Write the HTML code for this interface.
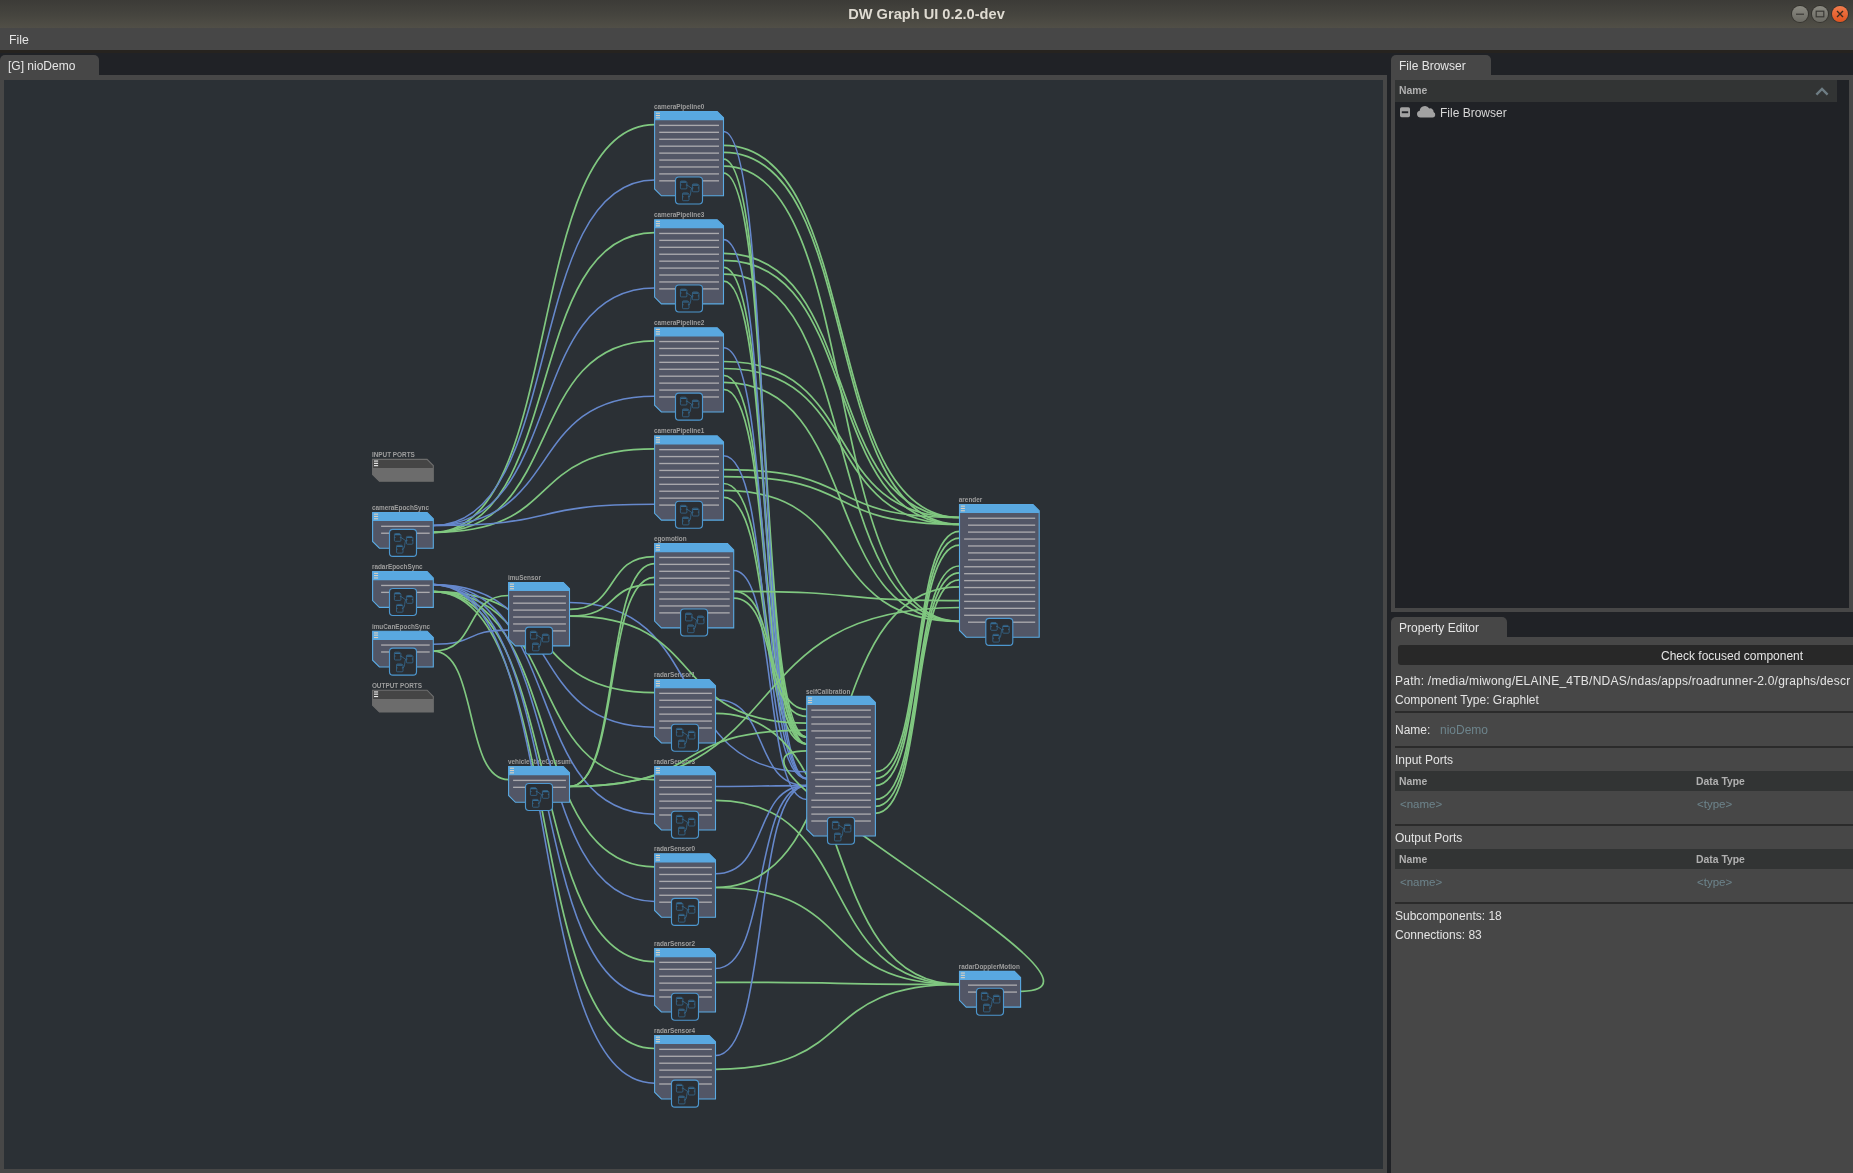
<!DOCTYPE html>
<html><head><meta charset="utf-8"><title>DW Graph UI 0.2.0-dev</title>
<style>
*{box-sizing:border-box}
html,body{margin:0;padding:0}
body{width:1853px;height:1173px;overflow:hidden;background:#474747;position:relative;
 font-family:"Liberation Sans",Arial,sans-serif;font-size:12px;color:#e4e4e4}
.abs{position:absolute}
#titlebar{left:0;top:0;width:1853px;height:28px;background:linear-gradient(#3c3b37,#45443e 50%,#514f47)}
#title{will-change:transform;left:0;top:0;width:1853px;height:28px;line-height:28.6px;text-align:center;font-weight:bold;font-size:14.6px;color:#dfdbd2}
.wb{width:16px;height:16px;border-radius:50%;top:6.2px;background:linear-gradient(#8b8a82,#6b6a63);box-shadow:0 0 0 1px rgba(40,38,34,.55)}
#menubar{left:0;top:28px;width:1853px;height:22px;background:#474747}
#tabbg{left:0;top:50px;width:1853px;height:25px;background:#202226;border-top:3px solid #26231f}
.tab{will-change:transform;background:#474747;border-radius:5px 5px 0 0;height:20px;line-height:22.6px;padding-left:8px;font-size:12px;color:#e6e6e6;white-space:nowrap}
#canvas{left:4px;top:80px;width:1379px;height:1089px;background:#2b3035}
#split{left:1387px;top:53px;width:4px;height:1120px;background:#202226}
#fb{left:1395px;top:80px;width:454px;height:528px;background:#202226}
#fbhead{left:1395px;top:80px;width:442px;height:22px;background:#323434}
.hd{font-weight:bold;font-size:10.4px;color:#b0b0b0}
#gap2{left:1391px;top:612px;width:462px;height:25px;background:#202226}
.t{white-space:nowrap;line-height:14px;height:14px;will-change:transform}
.dim{color:#6d848c}
.sep{left:1395px;width:458px;height:2px;background:#2b2b2b}
.th{left:1395px;width:458px;height:20px;background:#323434}
</style></head>
<body>
<div id="titlebar" class="abs"></div>
<div id="title" class="abs">DW Graph UI 0.2.0-dev</div>
<div class="abs wb" style="left:1792px"><svg width="16" height="16"><path d="M4 8.2h8" stroke="#3a3935" stroke-width="1.2"/></svg></div>
<div class="abs wb" style="left:1812px"><svg width="16" height="16"><rect x="4.2" y="5.2" width="7.6" height="5.6" fill="none" stroke="#3a3935" stroke-width="1.2"/></svg></div>
<div class="abs wb" style="left:1832px;background:linear-gradient(#f17c4d,#df531f)"><svg width="16" height="16"><path d="M5 5l6 6M11 5l-6 6" stroke="#3a2a1f" stroke-width="1.4"/></svg></div>
<div id="menubar" class="abs"></div>
<div class="abs t " style="left:9.3px;top:33.2px;font-size:12.3px">File</div>
<div id="tabbg" class="abs"></div>
<div class="abs tab" style="left:0;top:55px;width:99px">[G] nioDemo</div>
<div id="canvas" class="abs"></div>
<svg width="1379" height="1089" viewBox="4 80 1379 1089" style="position:absolute;left:4px;top:80px;will-change:transform">
<g font-family="Liberation Sans, Arial, sans-serif" font-size="6.4" font-weight="bold" fill="#9e9e9e">
<clipPath id="c_inp"><rect x="371.6" y="449.4" width="63.7" height="10"/></clipPath><text clip-path="url(#c_inp)" x="371.9" y="456.7">INPUT PORTS</text>
<clipPath id="c_ces"><rect x="371.6" y="502.5" width="63.7" height="10"/></clipPath><text clip-path="url(#c_ces)" x="371.9" y="509.8">cameraEpochSync</text>
<clipPath id="c_res"><rect x="371.6" y="561.6" width="63.7" height="10"/></clipPath><text clip-path="url(#c_res)" x="371.9" y="568.9">radarEpochSync</text>
<clipPath id="c_ices"><rect x="371.6" y="621.2" width="63.7" height="10"/></clipPath><text clip-path="url(#c_ices)" x="371.9" y="628.5">imuCanEpochSync</text>
<clipPath id="c_outp"><rect x="371.6" y="680.2" width="63.7" height="10"/></clipPath><text clip-path="url(#c_outp)" x="371.9" y="687.5">OUTPUT PORTS</text>
<clipPath id="c_imu"><rect x="507.6" y="572.5" width="64.0" height="10"/></clipPath><text clip-path="url(#c_imu)" x="507.9" y="579.8">imuSensor</text>
<clipPath id="c_vsc"><rect x="507.6" y="756.6" width="64.0" height="10"/></clipPath><text clip-path="url(#c_vsc)" x="507.9" y="763.9">vehicleStateConsumer</text>
<clipPath id="c_cp0"><rect x="653.6" y="101.6" width="71.9" height="10"/></clipPath><text clip-path="url(#c_cp0)" x="653.9" y="108.9">cameraPipeline0</text>
<clipPath id="c_cp3"><rect x="653.6" y="209.7" width="71.9" height="10"/></clipPath><text clip-path="url(#c_cp3)" x="653.9" y="217.0">cameraPipeline3</text>
<clipPath id="c_cp2"><rect x="653.6" y="317.8" width="71.9" height="10"/></clipPath><text clip-path="url(#c_cp2)" x="653.9" y="325.1">cameraPipeline2</text>
<clipPath id="c_cp1"><rect x="653.6" y="425.9" width="71.9" height="10"/></clipPath><text clip-path="url(#c_cp1)" x="653.9" y="433.2">cameraPipeline1</text>
<clipPath id="c_ego"><rect x="653.6" y="533.6" width="82.1" height="10"/></clipPath><text clip-path="url(#c_ego)" x="653.9" y="540.9">egomotion</text>
<clipPath id="c_rs1"><rect x="653.6" y="669.6" width="63.9" height="10"/></clipPath><text clip-path="url(#c_rs1)" x="653.9" y="676.9">radarSensor1</text>
<clipPath id="c_rs3"><rect x="653.6" y="756.6" width="63.9" height="10"/></clipPath><text clip-path="url(#c_rs3)" x="653.9" y="763.9">radarSensor3</text>
<clipPath id="c_rs0"><rect x="653.6" y="843.8" width="63.9" height="10"/></clipPath><text clip-path="url(#c_rs0)" x="653.9" y="851.0">radarSensor0</text>
<clipPath id="c_rs2"><rect x="653.6" y="938.6" width="63.9" height="10"/></clipPath><text clip-path="url(#c_rs2)" x="653.9" y="945.9">radarSensor2</text>
<clipPath id="c_rs4"><rect x="653.6" y="1025.5" width="63.9" height="10"/></clipPath><text clip-path="url(#c_rs4)" x="653.9" y="1032.8">radarSensor4</text>
<clipPath id="c_sc"><rect x="805.7" y="686.4" width="71.7" height="10"/></clipPath><text clip-path="url(#c_sc)" x="806.0" y="693.6">selfCalibration</text>
<clipPath id="c_ar"><rect x="958.5" y="494.5" width="82.7" height="10"/></clipPath><text clip-path="url(#c_ar)" x="958.8" y="501.8">arender</text>
<clipPath id="c_rdm"><rect x="958.5" y="961.4" width="64.1" height="10"/></clipPath><text clip-path="url(#c_rdm)" x="958.8" y="968.6">radarDopplerMotion</text>
</g>
<g fill="none" stroke-linecap="round">
<path d="M433.3 532.4C566.1 532.4 521.8 124.6 654.6 124.6" stroke="#80c880" stroke-width="1.7"/>
<path d="M723.5 145.4C865.1 145.4 817.9 517.5 959.5 517.5" stroke="#80c880" stroke-width="1.7"/>
<path d="M723.5 152.3C865.1 152.3 817.9 524.4 959.5 524.4" stroke="#80c880" stroke-width="1.7"/>
<path d="M723.5 159.2C773.4 159.2 756.7 737.1 806.7 737.1" stroke="#80c880" stroke-width="1.7"/>
<path d="M723.5 166.2C865.1 166.2 817.9 621.4 959.5 621.4" stroke="#80c880" stroke-width="1.7"/>
<path d="M723.5 173.1C773.4 173.1 756.7 744.0 806.7 744.0" stroke="#80c880" stroke-width="1.7"/>
<path d="M433.3 532.4C566.1 532.4 521.8 232.7 654.6 232.7" stroke="#80c880" stroke-width="1.7"/>
<path d="M723.5 253.4C865.1 253.4 817.9 517.5 959.5 517.5" stroke="#80c880" stroke-width="1.7"/>
<path d="M723.5 260.4C865.1 260.4 817.9 524.4 959.5 524.4" stroke="#80c880" stroke-width="1.7"/>
<path d="M723.5 267.3C773.4 267.3 756.7 737.1 806.7 737.1" stroke="#80c880" stroke-width="1.7"/>
<path d="M723.5 274.2C865.1 274.2 817.9 621.4 959.5 621.4" stroke="#80c880" stroke-width="1.7"/>
<path d="M723.5 281.2C773.4 281.2 756.7 744.0 806.7 744.0" stroke="#80c880" stroke-width="1.7"/>
<path d="M433.3 532.4C566.1 532.4 521.8 340.8 654.6 340.8" stroke="#80c880" stroke-width="1.7"/>
<path d="M723.5 361.5C865.1 361.5 817.9 517.5 959.5 517.5" stroke="#80c880" stroke-width="1.7"/>
<path d="M723.5 368.5C865.1 368.5 817.9 524.4 959.5 524.4" stroke="#80c880" stroke-width="1.7"/>
<path d="M723.5 375.4C773.4 375.4 756.7 737.1 806.7 737.1" stroke="#80c880" stroke-width="1.7"/>
<path d="M723.5 382.3C865.1 382.3 817.9 621.4 959.5 621.4" stroke="#80c880" stroke-width="1.7"/>
<path d="M723.5 389.3C773.4 389.3 756.7 744.0 806.7 744.0" stroke="#80c880" stroke-width="1.7"/>
<path d="M433.3 532.4C566.1 532.4 521.8 448.9 654.6 448.9" stroke="#80c880" stroke-width="1.7"/>
<path d="M723.5 469.6C865.1 469.6 817.9 517.5 959.5 517.5" stroke="#80c880" stroke-width="1.7"/>
<path d="M723.5 476.6C865.1 476.6 817.9 524.4 959.5 524.4" stroke="#80c880" stroke-width="1.7"/>
<path d="M723.5 483.5C773.4 483.5 756.7 737.1 806.7 737.1" stroke="#80c880" stroke-width="1.7"/>
<path d="M723.5 490.4C865.1 490.4 817.9 621.4 959.5 621.4" stroke="#80c880" stroke-width="1.7"/>
<path d="M723.5 497.4C773.4 497.4 756.7 744.0 806.7 744.0" stroke="#80c880" stroke-width="1.7"/>
<path d="M433.3 525.5C566.1 525.5 521.8 180.0 654.6 180.0" stroke="#6688cc" stroke-width="1.55"/>
<path d="M723.5 131.5C773.4 131.5 756.7 778.6 806.7 778.6" stroke="#6688cc" stroke-width="1.55"/>
<path d="M433.3 525.5C566.1 525.5 521.8 288.1 654.6 288.1" stroke="#6688cc" stroke-width="1.55"/>
<path d="M723.5 239.6C773.4 239.6 756.7 778.6 806.7 778.6" stroke="#6688cc" stroke-width="1.55"/>
<path d="M433.3 525.5C566.1 525.5 521.8 396.2 654.6 396.2" stroke="#6688cc" stroke-width="1.55"/>
<path d="M723.5 347.7C773.4 347.7 756.7 778.6 806.7 778.6" stroke="#6688cc" stroke-width="1.55"/>
<path d="M433.3 525.5C566.1 525.5 521.8 504.3 654.6 504.3" stroke="#6688cc" stroke-width="1.55"/>
<path d="M723.5 455.8C773.4 455.8 756.7 778.6 806.7 778.6" stroke="#6688cc" stroke-width="1.55"/>
<path d="M433.3 591.6C566.1 591.6 521.8 692.6 654.6 692.6" stroke="#80c880" stroke-width="1.7"/>
<path d="M715.5 713.3C861.9 713.3 813.1 984.4 959.5 984.4" stroke="#80c880" stroke-width="1.7"/>
<path d="M433.3 591.6C566.1 591.6 521.8 779.6 654.6 779.6" stroke="#80c880" stroke-width="1.7"/>
<path d="M715.5 800.3C861.9 800.3 813.1 984.4 959.5 984.4" stroke="#80c880" stroke-width="1.7"/>
<path d="M433.3 591.6C566.1 591.6 521.8 866.8 654.6 866.8" stroke="#80c880" stroke-width="1.7"/>
<path d="M715.5 887.5C861.9 887.5 813.1 984.4 959.5 984.4" stroke="#80c880" stroke-width="1.7"/>
<path d="M433.3 591.6C566.1 591.6 521.8 961.6 654.6 961.6" stroke="#80c880" stroke-width="1.7"/>
<path d="M715.5 982.3C861.9 982.3 813.1 984.4 959.5 984.4" stroke="#80c880" stroke-width="1.7"/>
<path d="M433.3 591.6C566.1 591.6 521.8 1048.5 654.6 1048.5" stroke="#80c880" stroke-width="1.7"/>
<path d="M715.5 1069.3C861.9 1069.3 813.1 984.4 959.5 984.4" stroke="#80c880" stroke-width="1.7"/>
<path d="M433.3 584.6C566.1 584.6 521.8 727.2 654.6 727.2" stroke="#6688cc" stroke-width="1.55"/>
<path d="M715.5 699.5C770.2 699.5 751.9 785.6 806.7 785.6" stroke="#6688cc" stroke-width="1.55"/>
<path d="M433.3 584.6C566.1 584.6 521.8 814.2 654.6 814.2" stroke="#6688cc" stroke-width="1.55"/>
<path d="M715.5 786.5C770.2 786.5 751.9 785.6 806.7 785.6" stroke="#6688cc" stroke-width="1.55"/>
<path d="M433.3 584.6C566.1 584.6 521.8 901.4 654.6 901.4" stroke="#6688cc" stroke-width="1.55"/>
<path d="M715.5 873.7C770.2 873.7 751.9 785.6 806.7 785.6" stroke="#6688cc" stroke-width="1.55"/>
<path d="M433.3 584.6C566.1 584.6 521.8 996.2 654.6 996.2" stroke="#6688cc" stroke-width="1.55"/>
<path d="M715.5 968.5C770.2 968.5 751.9 785.6 806.7 785.6" stroke="#6688cc" stroke-width="1.55"/>
<path d="M433.3 584.6C566.1 584.6 521.8 1083.2 654.6 1083.2" stroke="#6688cc" stroke-width="1.55"/>
<path d="M715.5 1055.5C770.2 1055.5 751.9 785.6 806.7 785.6" stroke="#6688cc" stroke-width="1.55"/>
<path d="M715.5 887.5C861.9 887.5 813.1 586.8 959.5 586.8" stroke="#80c880" stroke-width="1.7"/>
<path d="M433.3 644.2C478.5 644.2 463.4 630.1 508.6 630.1" stroke="#6688cc" stroke-width="1.55"/>
<path d="M433.3 651.2C478.5 651.2 463.4 595.5 508.6 595.5" stroke="#80c880" stroke-width="1.7"/>
<path d="M433.3 651.2C478.5 651.2 463.4 779.6 508.6 779.6" stroke="#80c880" stroke-width="1.7"/>
<path d="M569.5 602.4C711.8 602.4 664.4 771.7 806.7 771.7" stroke="#6688cc" stroke-width="1.55"/>
<path d="M569.5 609.3C620.6 609.3 603.5 556.6 654.6 556.6" stroke="#80c880" stroke-width="1.7"/>
<path d="M569.5 616.2C620.6 616.2 603.5 584.4 654.6 584.4" stroke="#80c880" stroke-width="1.7"/>
<path d="M569.5 616.2C711.8 616.2 664.4 723.2 806.7 723.2" stroke="#80c880" stroke-width="1.7"/>
<path d="M569.5 786.5C620.6 786.5 603.5 563.6 654.6 563.6" stroke="#80c880" stroke-width="1.7"/>
<path d="M569.5 786.5C620.6 786.5 603.5 577.4 654.6 577.4" stroke="#80c880" stroke-width="1.7"/>
<path d="M569.5 786.5C711.8 786.5 664.4 730.1 806.7 730.1" stroke="#80c880" stroke-width="1.7"/>
<path d="M569.5 786.5C803.5 786.5 725.5 607.5 959.5 607.5" stroke="#80c880" stroke-width="1.7"/>
<path d="M733.7 570.5C777.5 570.5 762.9 799.4 806.7 799.4" stroke="#6688cc" stroke-width="1.55"/>
<path d="M733.7 591.3C869.1 591.3 824.0 600.6 959.5 600.6" stroke="#80c880" stroke-width="1.7"/>
<path d="M733.7 591.3C777.5 591.3 762.9 709.4 806.7 709.4" stroke="#80c880" stroke-width="1.7"/>
<path d="M733.7 598.2C777.5 598.2 762.9 716.3 806.7 716.3" stroke="#80c880" stroke-width="1.7"/>
<path d="M875.4 771.7C925.8 771.7 909.0 531.3 959.5 531.3" stroke="#80c880" stroke-width="1.7"/>
<path d="M875.4 778.6C925.8 778.6 909.0 538.2 959.5 538.2" stroke="#80c880" stroke-width="1.7"/>
<path d="M875.4 785.6C925.8 785.6 909.0 545.2 959.5 545.2" stroke="#80c880" stroke-width="1.7"/>
<path d="M875.4 799.4C925.8 799.4 909.0 566.0 959.5 566.0" stroke="#80c880" stroke-width="1.7"/>
<path d="M875.4 806.4C925.8 806.4 909.0 572.9 959.5 572.9" stroke="#80c880" stroke-width="1.7"/>
<path d="M875.4 813.3C925.8 813.3 909.0 579.8 959.5 579.8" stroke="#80c880" stroke-width="1.7"/>
<path d="M1020.6 991.3C1151.0 991.3 676.2 750.9 806.7 750.9" stroke="#80c880" stroke-width="1.7"/>
</g>
<polygon points="372.6,459.4 427.1,459.4 433.3,465.6 433.3,481.2 379.4,481.2 372.6,474.4" fill="#6c6c6c"/>
<polygon points="372.6,459.4 427.1,459.4 433.3,465.6 433.3,468.0 372.6,468.0" fill="#454545"/>
<polygon points="372.6,459.4 427.1,459.4 433.3,465.6 433.3,481.2 379.4,481.2 372.6,474.4" fill="none" stroke="#6c6c6c" stroke-width="1.1"/>
<rect x="374.0" y="460.5" width="4.1" height="1.1" fill="#f0f0f0"/>
<rect x="374.0" y="462.8" width="4.1" height="1.1" fill="#f0f0f0"/>
<rect x="374.0" y="465.1" width="4.1" height="1.1" fill="#f0f0f0"/>
<polygon points="372.6,512.5 427.1,512.5 433.3,518.7 433.3,548.2 379.4,548.2 372.6,541.4" fill="#525666"/>
<polygon points="372.6,512.5 427.1,512.5 433.3,518.7 433.3,521.1 372.6,521.1" fill="#59a8e0"/>
<polygon points="372.6,512.5 427.1,512.5 433.3,518.7 433.3,548.2 379.4,548.2 372.6,541.4" fill="none" stroke="#5aaae3" stroke-width="1.1"/>
<rect x="374.0" y="513.6" width="4.1" height="1.1" fill="#d9cfc0"/>
<rect x="374.0" y="515.9" width="4.1" height="1.1" fill="#d9cfc0"/>
<rect x="374.0" y="518.2" width="4.1" height="1.1" fill="#d9cfc0"/>
<rect x="381.1" y="525.62" width="48.6" height="1.35" fill="#aaa9ad"/>
<rect x="381.1" y="532.55" width="48.6" height="1.35" fill="#aaa9ad"/>
<g transform="translate(389.5 529.4)">
<rect x="0" y="0" width="27.0" height="27.0" rx="3.4" fill="#2a2e33" stroke="#4d97cf" stroke-width="1.15"/>
<g fill="none" stroke="#366c94" stroke-width="0.75" transform="translate(-0.4 -0.4)"><path d="M5.3 5.4q0-.9.9-.9h4.3l1.3 1.3v5.6q0 .9-.9.9h-4.7q-.9 0-.9-.9z"/><path d="M17.3 8.3q0-.9.9-.9h4.3l1.3 1.3v5.6q0 .9-.9.9h-4.7q-.9 0-.9-.9z"/><path d="M7.4 17.2q0-.9.9-.9h4.3l1.3 1.3v5.6q0 .9-.9.9h-4.7q-.9 0-.9-.9z"/><path d="M11.8 8.3L16.3 11.5h1M13.9 20.4c2.2-1.2 1.4-6.6 2.6-8.8"/><path d="M5.6 5.6h5.6M17.6 8.5h5.6M7.7 17.4h5.6" stroke-width="1.2"/><path d="M5.3 8.4h1.1M11.8 8.4h-1.1M17.3 11.3h1.1M23.8 11.3h-1.1M7.4 20.2h1.1M13.9 20.2h-1.1" stroke-width="0.9"/></g>
</g>
<polygon points="372.6,571.6 427.1,571.6 433.3,577.9 433.3,607.4 379.4,607.4 372.6,600.6" fill="#525666"/>
<polygon points="372.6,571.6 427.1,571.6 433.3,577.9 433.3,580.2 372.6,580.2" fill="#59a8e0"/>
<polygon points="372.6,571.6 427.1,571.6 433.3,577.9 433.3,607.4 379.4,607.4 372.6,600.6" fill="none" stroke="#5aaae3" stroke-width="1.1"/>
<rect x="374.0" y="572.8" width="4.1" height="1.1" fill="#d9cfc0"/>
<rect x="374.0" y="575.0" width="4.1" height="1.1" fill="#d9cfc0"/>
<rect x="374.0" y="577.4" width="4.1" height="1.1" fill="#d9cfc0"/>
<rect x="381.1" y="584.77" width="48.6" height="1.35" fill="#aaa9ad"/>
<rect x="381.1" y="591.70" width="48.6" height="1.35" fill="#aaa9ad"/>
<g transform="translate(389.5 588.5)">
<rect x="0" y="0" width="27.0" height="27.0" rx="3.4" fill="#2a2e33" stroke="#4d97cf" stroke-width="1.15"/>
<g fill="none" stroke="#366c94" stroke-width="0.75" transform="translate(-0.4 -0.4)"><path d="M5.3 5.4q0-.9.9-.9h4.3l1.3 1.3v5.6q0 .9-.9.9h-4.7q-.9 0-.9-.9z"/><path d="M17.3 8.3q0-.9.9-.9h4.3l1.3 1.3v5.6q0 .9-.9.9h-4.7q-.9 0-.9-.9z"/><path d="M7.4 17.2q0-.9.9-.9h4.3l1.3 1.3v5.6q0 .9-.9.9h-4.7q-.9 0-.9-.9z"/><path d="M11.8 8.3L16.3 11.5h1M13.9 20.4c2.2-1.2 1.4-6.6 2.6-8.8"/><path d="M5.6 5.6h5.6M17.6 8.5h5.6M7.7 17.4h5.6" stroke-width="1.2"/><path d="M5.3 8.4h1.1M11.8 8.4h-1.1M17.3 11.3h1.1M23.8 11.3h-1.1M7.4 20.2h1.1M13.9 20.2h-1.1" stroke-width="0.9"/></g>
</g>
<polygon points="372.6,631.2 427.1,631.2 433.3,637.5 433.3,667.0 379.4,667.0 372.6,660.2" fill="#525666"/>
<polygon points="372.6,631.2 427.1,631.2 433.3,637.5 433.3,639.9 372.6,639.9" fill="#59a8e0"/>
<polygon points="372.6,631.2 427.1,631.2 433.3,637.5 433.3,667.0 379.4,667.0 372.6,660.2" fill="none" stroke="#5aaae3" stroke-width="1.1"/>
<rect x="374.0" y="632.4" width="4.1" height="1.1" fill="#d9cfc0"/>
<rect x="374.0" y="634.6" width="4.1" height="1.1" fill="#d9cfc0"/>
<rect x="374.0" y="637.0" width="4.1" height="1.1" fill="#d9cfc0"/>
<rect x="381.1" y="644.37" width="48.6" height="1.35" fill="#aaa9ad"/>
<rect x="381.1" y="651.30" width="48.6" height="1.35" fill="#aaa9ad"/>
<g transform="translate(389.5 648.1)">
<rect x="0" y="0" width="27.0" height="27.0" rx="3.4" fill="#2a2e33" stroke="#4d97cf" stroke-width="1.15"/>
<g fill="none" stroke="#366c94" stroke-width="0.75" transform="translate(-0.4 -0.4)"><path d="M5.3 5.4q0-.9.9-.9h4.3l1.3 1.3v5.6q0 .9-.9.9h-4.7q-.9 0-.9-.9z"/><path d="M17.3 8.3q0-.9.9-.9h4.3l1.3 1.3v5.6q0 .9-.9.9h-4.7q-.9 0-.9-.9z"/><path d="M7.4 17.2q0-.9.9-.9h4.3l1.3 1.3v5.6q0 .9-.9.9h-4.7q-.9 0-.9-.9z"/><path d="M11.8 8.3L16.3 11.5h1M13.9 20.4c2.2-1.2 1.4-6.6 2.6-8.8"/><path d="M5.6 5.6h5.6M17.6 8.5h5.6M7.7 17.4h5.6" stroke-width="1.2"/><path d="M5.3 8.4h1.1M11.8 8.4h-1.1M17.3 11.3h1.1M23.8 11.3h-1.1M7.4 20.2h1.1M13.9 20.2h-1.1" stroke-width="0.9"/></g>
</g>
<polygon points="372.6,690.2 427.1,690.2 433.3,696.5 433.3,712.0 379.4,712.0 372.6,705.2" fill="#6c6c6c"/>
<polygon points="372.6,690.2 427.1,690.2 433.3,696.5 433.3,698.9 372.6,698.9" fill="#454545"/>
<polygon points="372.6,690.2 427.1,690.2 433.3,696.5 433.3,712.0 379.4,712.0 372.6,705.2" fill="none" stroke="#6c6c6c" stroke-width="1.1"/>
<rect x="374.0" y="691.4" width="4.1" height="1.1" fill="#f0f0f0"/>
<rect x="374.0" y="693.6" width="4.1" height="1.1" fill="#f0f0f0"/>
<rect x="374.0" y="696.0" width="4.1" height="1.1" fill="#f0f0f0"/>
<polygon points="508.6,582.5 563.3,582.5 569.5,588.7 569.5,645.9 515.4,645.9 508.6,639.1" fill="#525666"/>
<polygon points="508.6,582.5 563.3,582.5 569.5,588.7 569.5,591.1 508.6,591.1" fill="#59a8e0"/>
<polygon points="508.6,582.5 563.3,582.5 569.5,588.7 569.5,645.9 515.4,645.9 508.6,639.1" fill="none" stroke="#5aaae3" stroke-width="1.1"/>
<rect x="509.9" y="583.6" width="4.1" height="1.1" fill="#d9cfc0"/>
<rect x="509.9" y="585.9" width="4.1" height="1.1" fill="#d9cfc0"/>
<rect x="509.9" y="588.2" width="4.1" height="1.1" fill="#d9cfc0"/>
<rect x="513.1" y="595.57" width="52.8" height="1.35" fill="#aaa9ad"/>
<rect x="513.1" y="602.50" width="52.8" height="1.35" fill="#aaa9ad"/>
<rect x="513.1" y="609.43" width="52.8" height="1.35" fill="#aaa9ad"/>
<rect x="513.1" y="616.36" width="52.8" height="1.35" fill="#aaa9ad"/>
<rect x="513.1" y="623.29" width="52.8" height="1.35" fill="#aaa9ad"/>
<rect x="513.1" y="630.22" width="52.8" height="1.35" fill="#aaa9ad"/>
<g transform="translate(525.5 627.1)">
<rect x="0" y="0" width="27.0" height="27.0" rx="3.4" fill="#2a2e33" stroke="#4d97cf" stroke-width="1.15"/>
<g fill="none" stroke="#366c94" stroke-width="0.75" transform="translate(-0.4 -0.4)"><path d="M5.3 5.4q0-.9.9-.9h4.3l1.3 1.3v5.6q0 .9-.9.9h-4.7q-.9 0-.9-.9z"/><path d="M17.3 8.3q0-.9.9-.9h4.3l1.3 1.3v5.6q0 .9-.9.9h-4.7q-.9 0-.9-.9z"/><path d="M7.4 17.2q0-.9.9-.9h4.3l1.3 1.3v5.6q0 .9-.9.9h-4.7q-.9 0-.9-.9z"/><path d="M11.8 8.3L16.3 11.5h1M13.9 20.4c2.2-1.2 1.4-6.6 2.6-8.8"/><path d="M5.6 5.6h5.6M17.6 8.5h5.6M7.7 17.4h5.6" stroke-width="1.2"/><path d="M5.3 8.4h1.1M11.8 8.4h-1.1M17.3 11.3h1.1M23.8 11.3h-1.1M7.4 20.2h1.1M13.9 20.2h-1.1" stroke-width="0.9"/></g>
</g>
<polygon points="508.6,766.6 563.3,766.6 569.5,772.8 569.5,802.3 515.4,802.3 508.6,795.5" fill="#525666"/>
<polygon points="508.6,766.6 563.3,766.6 569.5,772.8 569.5,775.2 508.6,775.2" fill="#59a8e0"/>
<polygon points="508.6,766.6 563.3,766.6 569.5,772.8 569.5,802.3 515.4,802.3 508.6,795.5" fill="none" stroke="#5aaae3" stroke-width="1.1"/>
<rect x="509.9" y="767.7" width="4.1" height="1.1" fill="#d9cfc0"/>
<rect x="509.9" y="770.0" width="4.1" height="1.1" fill="#d9cfc0"/>
<rect x="509.9" y="772.3" width="4.1" height="1.1" fill="#d9cfc0"/>
<rect x="513.1" y="779.72" width="52.8" height="1.35" fill="#aaa9ad"/>
<rect x="513.1" y="786.65" width="52.8" height="1.35" fill="#aaa9ad"/>
<g transform="translate(525.5 783.5)">
<rect x="0" y="0" width="27.0" height="27.0" rx="3.4" fill="#2a2e33" stroke="#4d97cf" stroke-width="1.15"/>
<g fill="none" stroke="#366c94" stroke-width="0.75" transform="translate(-0.4 -0.4)"><path d="M5.3 5.4q0-.9.9-.9h4.3l1.3 1.3v5.6q0 .9-.9.9h-4.7q-.9 0-.9-.9z"/><path d="M17.3 8.3q0-.9.9-.9h4.3l1.3 1.3v5.6q0 .9-.9.9h-4.7q-.9 0-.9-.9z"/><path d="M7.4 17.2q0-.9.9-.9h4.3l1.3 1.3v5.6q0 .9-.9.9h-4.7q-.9 0-.9-.9z"/><path d="M11.8 8.3L16.3 11.5h1M13.9 20.4c2.2-1.2 1.4-6.6 2.6-8.8"/><path d="M5.6 5.6h5.6M17.6 8.5h5.6M7.7 17.4h5.6" stroke-width="1.2"/><path d="M5.3 8.4h1.1M11.8 8.4h-1.1M17.3 11.3h1.1M23.8 11.3h-1.1M7.4 20.2h1.1M13.9 20.2h-1.1" stroke-width="0.9"/></g>
</g>
<polygon points="654.6,111.6 717.2,111.6 723.5,117.8 723.5,195.8 661.4,195.8 654.6,189.0" fill="#525666"/>
<polygon points="654.6,111.6 717.2,111.6 723.5,117.8 723.5,120.2 654.6,120.2" fill="#59a8e0"/>
<polygon points="654.6,111.6 717.2,111.6 723.5,117.8 723.5,195.8 661.4,195.8 654.6,189.0" fill="none" stroke="#5aaae3" stroke-width="1.1"/>
<rect x="655.9" y="112.7" width="4.1" height="1.1" fill="#d9cfc0"/>
<rect x="655.9" y="115.0" width="4.1" height="1.1" fill="#d9cfc0"/>
<rect x="655.9" y="117.3" width="4.1" height="1.1" fill="#d9cfc0"/>
<rect x="659.2" y="124.72" width="59.8" height="1.35" fill="#aaa9ad"/>
<rect x="659.2" y="131.65" width="59.8" height="1.35" fill="#aaa9ad"/>
<rect x="659.2" y="138.58" width="59.8" height="1.35" fill="#aaa9ad"/>
<rect x="659.2" y="145.51" width="59.8" height="1.35" fill="#aaa9ad"/>
<rect x="659.2" y="152.44" width="59.8" height="1.35" fill="#aaa9ad"/>
<rect x="659.2" y="159.37" width="59.8" height="1.35" fill="#aaa9ad"/>
<rect x="659.2" y="166.30" width="59.8" height="1.35" fill="#aaa9ad"/>
<rect x="659.2" y="173.23" width="59.8" height="1.35" fill="#aaa9ad"/>
<rect x="659.2" y="180.16" width="59.8" height="1.35" fill="#aaa9ad"/>
<g transform="translate(675.5 177.0)">
<rect x="0" y="0" width="27.0" height="27.0" rx="3.4" fill="#2a2e33" stroke="#4d97cf" stroke-width="1.15"/>
<g fill="none" stroke="#366c94" stroke-width="0.75" transform="translate(-0.4 -0.4)"><path d="M5.3 5.4q0-.9.9-.9h4.3l1.3 1.3v5.6q0 .9-.9.9h-4.7q-.9 0-.9-.9z"/><path d="M17.3 8.3q0-.9.9-.9h4.3l1.3 1.3v5.6q0 .9-.9.9h-4.7q-.9 0-.9-.9z"/><path d="M7.4 17.2q0-.9.9-.9h4.3l1.3 1.3v5.6q0 .9-.9.9h-4.7q-.9 0-.9-.9z"/><path d="M11.8 8.3L16.3 11.5h1M13.9 20.4c2.2-1.2 1.4-6.6 2.6-8.8"/><path d="M5.6 5.6h5.6M17.6 8.5h5.6M7.7 17.4h5.6" stroke-width="1.2"/><path d="M5.3 8.4h1.1M11.8 8.4h-1.1M17.3 11.3h1.1M23.8 11.3h-1.1M7.4 20.2h1.1M13.9 20.2h-1.1" stroke-width="0.9"/></g>
</g>
<polygon points="654.6,219.7 717.2,219.7 723.5,225.8 723.5,303.9 661.4,303.9 654.6,297.1" fill="#525666"/>
<polygon points="654.6,219.7 717.2,219.7 723.5,225.8 723.5,228.2 654.6,228.2" fill="#59a8e0"/>
<polygon points="654.6,219.7 717.2,219.7 723.5,225.8 723.5,303.9 661.4,303.9 654.6,297.1" fill="none" stroke="#5aaae3" stroke-width="1.1"/>
<rect x="655.9" y="220.8" width="4.1" height="1.1" fill="#d9cfc0"/>
<rect x="655.9" y="223.1" width="4.1" height="1.1" fill="#d9cfc0"/>
<rect x="655.9" y="225.3" width="4.1" height="1.1" fill="#d9cfc0"/>
<rect x="659.2" y="232.77" width="59.8" height="1.35" fill="#aaa9ad"/>
<rect x="659.2" y="239.70" width="59.8" height="1.35" fill="#aaa9ad"/>
<rect x="659.2" y="246.63" width="59.8" height="1.35" fill="#aaa9ad"/>
<rect x="659.2" y="253.56" width="59.8" height="1.35" fill="#aaa9ad"/>
<rect x="659.2" y="260.49" width="59.8" height="1.35" fill="#aaa9ad"/>
<rect x="659.2" y="267.42" width="59.8" height="1.35" fill="#aaa9ad"/>
<rect x="659.2" y="274.35" width="59.8" height="1.35" fill="#aaa9ad"/>
<rect x="659.2" y="281.28" width="59.8" height="1.35" fill="#aaa9ad"/>
<rect x="659.2" y="288.21" width="59.8" height="1.35" fill="#aaa9ad"/>
<g transform="translate(675.5 285.0)">
<rect x="0" y="0" width="27.0" height="27.0" rx="3.4" fill="#2a2e33" stroke="#4d97cf" stroke-width="1.15"/>
<g fill="none" stroke="#366c94" stroke-width="0.75" transform="translate(-0.4 -0.4)"><path d="M5.3 5.4q0-.9.9-.9h4.3l1.3 1.3v5.6q0 .9-.9.9h-4.7q-.9 0-.9-.9z"/><path d="M17.3 8.3q0-.9.9-.9h4.3l1.3 1.3v5.6q0 .9-.9.9h-4.7q-.9 0-.9-.9z"/><path d="M7.4 17.2q0-.9.9-.9h4.3l1.3 1.3v5.6q0 .9-.9.9h-4.7q-.9 0-.9-.9z"/><path d="M11.8 8.3L16.3 11.5h1M13.9 20.4c2.2-1.2 1.4-6.6 2.6-8.8"/><path d="M5.6 5.6h5.6M17.6 8.5h5.6M7.7 17.4h5.6" stroke-width="1.2"/><path d="M5.3 8.4h1.1M11.8 8.4h-1.1M17.3 11.3h1.1M23.8 11.3h-1.1M7.4 20.2h1.1M13.9 20.2h-1.1" stroke-width="0.9"/></g>
</g>
<polygon points="654.6,327.8 717.2,327.8 723.5,333.9 723.5,412.0 661.4,412.0 654.6,405.2" fill="#525666"/>
<polygon points="654.6,327.8 717.2,327.8 723.5,333.9 723.5,336.4 654.6,336.4" fill="#59a8e0"/>
<polygon points="654.6,327.8 717.2,327.8 723.5,333.9 723.5,412.0 661.4,412.0 654.6,405.2" fill="none" stroke="#5aaae3" stroke-width="1.1"/>
<rect x="655.9" y="328.9" width="4.1" height="1.1" fill="#d9cfc0"/>
<rect x="655.9" y="331.2" width="4.1" height="1.1" fill="#d9cfc0"/>
<rect x="655.9" y="333.5" width="4.1" height="1.1" fill="#d9cfc0"/>
<rect x="659.2" y="340.87" width="59.8" height="1.35" fill="#aaa9ad"/>
<rect x="659.2" y="347.80" width="59.8" height="1.35" fill="#aaa9ad"/>
<rect x="659.2" y="354.73" width="59.8" height="1.35" fill="#aaa9ad"/>
<rect x="659.2" y="361.66" width="59.8" height="1.35" fill="#aaa9ad"/>
<rect x="659.2" y="368.59" width="59.8" height="1.35" fill="#aaa9ad"/>
<rect x="659.2" y="375.52" width="59.8" height="1.35" fill="#aaa9ad"/>
<rect x="659.2" y="382.45" width="59.8" height="1.35" fill="#aaa9ad"/>
<rect x="659.2" y="389.38" width="59.8" height="1.35" fill="#aaa9ad"/>
<rect x="659.2" y="396.31" width="59.8" height="1.35" fill="#aaa9ad"/>
<g transform="translate(675.5 393.1)">
<rect x="0" y="0" width="27.0" height="27.0" rx="3.4" fill="#2a2e33" stroke="#4d97cf" stroke-width="1.15"/>
<g fill="none" stroke="#366c94" stroke-width="0.75" transform="translate(-0.4 -0.4)"><path d="M5.3 5.4q0-.9.9-.9h4.3l1.3 1.3v5.6q0 .9-.9.9h-4.7q-.9 0-.9-.9z"/><path d="M17.3 8.3q0-.9.9-.9h4.3l1.3 1.3v5.6q0 .9-.9.9h-4.7q-.9 0-.9-.9z"/><path d="M7.4 17.2q0-.9.9-.9h4.3l1.3 1.3v5.6q0 .9-.9.9h-4.7q-.9 0-.9-.9z"/><path d="M11.8 8.3L16.3 11.5h1M13.9 20.4c2.2-1.2 1.4-6.6 2.6-8.8"/><path d="M5.6 5.6h5.6M17.6 8.5h5.6M7.7 17.4h5.6" stroke-width="1.2"/><path d="M5.3 8.4h1.1M11.8 8.4h-1.1M17.3 11.3h1.1M23.8 11.3h-1.1M7.4 20.2h1.1M13.9 20.2h-1.1" stroke-width="0.9"/></g>
</g>
<polygon points="654.6,435.9 717.2,435.9 723.5,442.1 723.5,520.1 661.4,520.1 654.6,513.3" fill="#525666"/>
<polygon points="654.6,435.9 717.2,435.9 723.5,442.1 723.5,444.5 654.6,444.5" fill="#59a8e0"/>
<polygon points="654.6,435.9 717.2,435.9 723.5,442.1 723.5,520.1 661.4,520.1 654.6,513.3" fill="none" stroke="#5aaae3" stroke-width="1.1"/>
<rect x="655.9" y="437.0" width="4.1" height="1.1" fill="#d9cfc0"/>
<rect x="655.9" y="439.3" width="4.1" height="1.1" fill="#d9cfc0"/>
<rect x="655.9" y="441.6" width="4.1" height="1.1" fill="#d9cfc0"/>
<rect x="659.2" y="448.97" width="59.8" height="1.35" fill="#aaa9ad"/>
<rect x="659.2" y="455.90" width="59.8" height="1.35" fill="#aaa9ad"/>
<rect x="659.2" y="462.83" width="59.8" height="1.35" fill="#aaa9ad"/>
<rect x="659.2" y="469.76" width="59.8" height="1.35" fill="#aaa9ad"/>
<rect x="659.2" y="476.69" width="59.8" height="1.35" fill="#aaa9ad"/>
<rect x="659.2" y="483.62" width="59.8" height="1.35" fill="#aaa9ad"/>
<rect x="659.2" y="490.55" width="59.8" height="1.35" fill="#aaa9ad"/>
<rect x="659.2" y="497.48" width="59.8" height="1.35" fill="#aaa9ad"/>
<rect x="659.2" y="504.41" width="59.8" height="1.35" fill="#aaa9ad"/>
<g transform="translate(675.5 501.2)">
<rect x="0" y="0" width="27.0" height="27.0" rx="3.4" fill="#2a2e33" stroke="#4d97cf" stroke-width="1.15"/>
<g fill="none" stroke="#366c94" stroke-width="0.75" transform="translate(-0.4 -0.4)"><path d="M5.3 5.4q0-.9.9-.9h4.3l1.3 1.3v5.6q0 .9-.9.9h-4.7q-.9 0-.9-.9z"/><path d="M17.3 8.3q0-.9.9-.9h4.3l1.3 1.3v5.6q0 .9-.9.9h-4.7q-.9 0-.9-.9z"/><path d="M7.4 17.2q0-.9.9-.9h4.3l1.3 1.3v5.6q0 .9-.9.9h-4.7q-.9 0-.9-.9z"/><path d="M11.8 8.3L16.3 11.5h1M13.9 20.4c2.2-1.2 1.4-6.6 2.6-8.8"/><path d="M5.6 5.6h5.6M17.6 8.5h5.6M7.7 17.4h5.6" stroke-width="1.2"/><path d="M5.3 8.4h1.1M11.8 8.4h-1.1M17.3 11.3h1.1M23.8 11.3h-1.1M7.4 20.2h1.1M13.9 20.2h-1.1" stroke-width="0.9"/></g>
</g>
<polygon points="654.6,543.6 727.5,543.6 733.7,549.9 733.7,627.9 661.4,627.9 654.6,621.1" fill="#525666"/>
<polygon points="654.6,543.6 727.5,543.6 733.7,549.9 733.7,552.2 654.6,552.2" fill="#59a8e0"/>
<polygon points="654.6,543.6 727.5,543.6 733.7,549.9 733.7,627.9 661.4,627.9 654.6,621.1" fill="none" stroke="#5aaae3" stroke-width="1.1"/>
<rect x="655.9" y="544.8" width="4.1" height="1.1" fill="#d9cfc0"/>
<rect x="655.9" y="547.0" width="4.1" height="1.1" fill="#d9cfc0"/>
<rect x="655.9" y="549.4" width="4.1" height="1.1" fill="#d9cfc0"/>
<rect x="659.2" y="556.77" width="70.5" height="1.35" fill="#aaa9ad"/>
<rect x="659.2" y="563.70" width="70.5" height="1.35" fill="#aaa9ad"/>
<rect x="659.2" y="570.63" width="70.5" height="1.35" fill="#aaa9ad"/>
<rect x="659.2" y="577.56" width="70.5" height="1.35" fill="#aaa9ad"/>
<rect x="659.2" y="584.49" width="70.5" height="1.35" fill="#aaa9ad"/>
<rect x="659.2" y="591.42" width="70.5" height="1.35" fill="#aaa9ad"/>
<rect x="659.2" y="598.35" width="70.5" height="1.35" fill="#aaa9ad"/>
<rect x="659.2" y="605.28" width="70.5" height="1.35" fill="#aaa9ad"/>
<rect x="659.2" y="612.21" width="70.5" height="1.35" fill="#aaa9ad"/>
<g transform="translate(680.6 609.0)">
<rect x="0" y="0" width="27.0" height="27.0" rx="3.4" fill="#2a2e33" stroke="#4d97cf" stroke-width="1.15"/>
<g fill="none" stroke="#366c94" stroke-width="0.75" transform="translate(-0.4 -0.4)"><path d="M5.3 5.4q0-.9.9-.9h4.3l1.3 1.3v5.6q0 .9-.9.9h-4.7q-.9 0-.9-.9z"/><path d="M17.3 8.3q0-.9.9-.9h4.3l1.3 1.3v5.6q0 .9-.9.9h-4.7q-.9 0-.9-.9z"/><path d="M7.4 17.2q0-.9.9-.9h4.3l1.3 1.3v5.6q0 .9-.9.9h-4.7q-.9 0-.9-.9z"/><path d="M11.8 8.3L16.3 11.5h1M13.9 20.4c2.2-1.2 1.4-6.6 2.6-8.8"/><path d="M5.6 5.6h5.6M17.6 8.5h5.6M7.7 17.4h5.6" stroke-width="1.2"/><path d="M5.3 8.4h1.1M11.8 8.4h-1.1M17.3 11.3h1.1M23.8 11.3h-1.1M7.4 20.2h1.1M13.9 20.2h-1.1" stroke-width="0.9"/></g>
</g>
<polygon points="654.6,679.6 709.2,679.6 715.5,685.8 715.5,743.0 661.4,743.0 654.6,736.2" fill="#525666"/>
<polygon points="654.6,679.6 709.2,679.6 715.5,685.8 715.5,688.2 654.6,688.2" fill="#59a8e0"/>
<polygon points="654.6,679.6 709.2,679.6 715.5,685.8 715.5,743.0 661.4,743.0 654.6,736.2" fill="none" stroke="#5aaae3" stroke-width="1.1"/>
<rect x="655.9" y="680.7" width="4.1" height="1.1" fill="#d9cfc0"/>
<rect x="655.9" y="683.0" width="4.1" height="1.1" fill="#d9cfc0"/>
<rect x="655.9" y="685.3" width="4.1" height="1.1" fill="#d9cfc0"/>
<rect x="659.2" y="692.67" width="52.7" height="1.35" fill="#aaa9ad"/>
<rect x="659.2" y="699.60" width="52.7" height="1.35" fill="#aaa9ad"/>
<rect x="659.2" y="706.53" width="52.7" height="1.35" fill="#aaa9ad"/>
<rect x="659.2" y="713.46" width="52.7" height="1.35" fill="#aaa9ad"/>
<rect x="659.2" y="720.39" width="52.7" height="1.35" fill="#aaa9ad"/>
<rect x="659.2" y="727.32" width="52.7" height="1.35" fill="#aaa9ad"/>
<g transform="translate(671.5 724.2)">
<rect x="0" y="0" width="27.0" height="27.0" rx="3.4" fill="#2a2e33" stroke="#4d97cf" stroke-width="1.15"/>
<g fill="none" stroke="#366c94" stroke-width="0.75" transform="translate(-0.4 -0.4)"><path d="M5.3 5.4q0-.9.9-.9h4.3l1.3 1.3v5.6q0 .9-.9.9h-4.7q-.9 0-.9-.9z"/><path d="M17.3 8.3q0-.9.9-.9h4.3l1.3 1.3v5.6q0 .9-.9.9h-4.7q-.9 0-.9-.9z"/><path d="M7.4 17.2q0-.9.9-.9h4.3l1.3 1.3v5.6q0 .9-.9.9h-4.7q-.9 0-.9-.9z"/><path d="M11.8 8.3L16.3 11.5h1M13.9 20.4c2.2-1.2 1.4-6.6 2.6-8.8"/><path d="M5.6 5.6h5.6M17.6 8.5h5.6M7.7 17.4h5.6" stroke-width="1.2"/><path d="M5.3 8.4h1.1M11.8 8.4h-1.1M17.3 11.3h1.1M23.8 11.3h-1.1M7.4 20.2h1.1M13.9 20.2h-1.1" stroke-width="0.9"/></g>
</g>
<polygon points="654.6,766.6 709.2,766.6 715.5,772.8 715.5,830.0 661.4,830.0 654.6,823.2" fill="#525666"/>
<polygon points="654.6,766.6 709.2,766.6 715.5,772.8 715.5,775.2 654.6,775.2" fill="#59a8e0"/>
<polygon points="654.6,766.6 709.2,766.6 715.5,772.8 715.5,830.0 661.4,830.0 654.6,823.2" fill="none" stroke="#5aaae3" stroke-width="1.1"/>
<rect x="655.9" y="767.7" width="4.1" height="1.1" fill="#d9cfc0"/>
<rect x="655.9" y="770.0" width="4.1" height="1.1" fill="#d9cfc0"/>
<rect x="655.9" y="772.3" width="4.1" height="1.1" fill="#d9cfc0"/>
<rect x="659.2" y="779.67" width="52.7" height="1.35" fill="#aaa9ad"/>
<rect x="659.2" y="786.60" width="52.7" height="1.35" fill="#aaa9ad"/>
<rect x="659.2" y="793.53" width="52.7" height="1.35" fill="#aaa9ad"/>
<rect x="659.2" y="800.46" width="52.7" height="1.35" fill="#aaa9ad"/>
<rect x="659.2" y="807.39" width="52.7" height="1.35" fill="#aaa9ad"/>
<rect x="659.2" y="814.32" width="52.7" height="1.35" fill="#aaa9ad"/>
<g transform="translate(671.5 811.2)">
<rect x="0" y="0" width="27.0" height="27.0" rx="3.4" fill="#2a2e33" stroke="#4d97cf" stroke-width="1.15"/>
<g fill="none" stroke="#366c94" stroke-width="0.75" transform="translate(-0.4 -0.4)"><path d="M5.3 5.4q0-.9.9-.9h4.3l1.3 1.3v5.6q0 .9-.9.9h-4.7q-.9 0-.9-.9z"/><path d="M17.3 8.3q0-.9.9-.9h4.3l1.3 1.3v5.6q0 .9-.9.9h-4.7q-.9 0-.9-.9z"/><path d="M7.4 17.2q0-.9.9-.9h4.3l1.3 1.3v5.6q0 .9-.9.9h-4.7q-.9 0-.9-.9z"/><path d="M11.8 8.3L16.3 11.5h1M13.9 20.4c2.2-1.2 1.4-6.6 2.6-8.8"/><path d="M5.6 5.6h5.6M17.6 8.5h5.6M7.7 17.4h5.6" stroke-width="1.2"/><path d="M5.3 8.4h1.1M11.8 8.4h-1.1M17.3 11.3h1.1M23.8 11.3h-1.1M7.4 20.2h1.1M13.9 20.2h-1.1" stroke-width="0.9"/></g>
</g>
<polygon points="654.6,853.8 709.2,853.8 715.5,860.0 715.5,917.2 661.4,917.2 654.6,910.4" fill="#525666"/>
<polygon points="654.6,853.8 709.2,853.8 715.5,860.0 715.5,862.4 654.6,862.4" fill="#59a8e0"/>
<polygon points="654.6,853.8 709.2,853.8 715.5,860.0 715.5,917.2 661.4,917.2 654.6,910.4" fill="none" stroke="#5aaae3" stroke-width="1.1"/>
<rect x="655.9" y="854.9" width="4.1" height="1.1" fill="#d9cfc0"/>
<rect x="655.9" y="857.1" width="4.1" height="1.1" fill="#d9cfc0"/>
<rect x="655.9" y="859.5" width="4.1" height="1.1" fill="#d9cfc0"/>
<rect x="659.2" y="866.87" width="52.7" height="1.35" fill="#aaa9ad"/>
<rect x="659.2" y="873.80" width="52.7" height="1.35" fill="#aaa9ad"/>
<rect x="659.2" y="880.73" width="52.7" height="1.35" fill="#aaa9ad"/>
<rect x="659.2" y="887.66" width="52.7" height="1.35" fill="#aaa9ad"/>
<rect x="659.2" y="894.59" width="52.7" height="1.35" fill="#aaa9ad"/>
<rect x="659.2" y="901.52" width="52.7" height="1.35" fill="#aaa9ad"/>
<g transform="translate(671.5 898.4)">
<rect x="0" y="0" width="27.0" height="27.0" rx="3.4" fill="#2a2e33" stroke="#4d97cf" stroke-width="1.15"/>
<g fill="none" stroke="#366c94" stroke-width="0.75" transform="translate(-0.4 -0.4)"><path d="M5.3 5.4q0-.9.9-.9h4.3l1.3 1.3v5.6q0 .9-.9.9h-4.7q-.9 0-.9-.9z"/><path d="M17.3 8.3q0-.9.9-.9h4.3l1.3 1.3v5.6q0 .9-.9.9h-4.7q-.9 0-.9-.9z"/><path d="M7.4 17.2q0-.9.9-.9h4.3l1.3 1.3v5.6q0 .9-.9.9h-4.7q-.9 0-.9-.9z"/><path d="M11.8 8.3L16.3 11.5h1M13.9 20.4c2.2-1.2 1.4-6.6 2.6-8.8"/><path d="M5.6 5.6h5.6M17.6 8.5h5.6M7.7 17.4h5.6" stroke-width="1.2"/><path d="M5.3 8.4h1.1M11.8 8.4h-1.1M17.3 11.3h1.1M23.8 11.3h-1.1M7.4 20.2h1.1M13.9 20.2h-1.1" stroke-width="0.9"/></g>
</g>
<polygon points="654.6,948.6 709.2,948.6 715.5,954.8 715.5,1012.0 661.4,1012.0 654.6,1005.2" fill="#525666"/>
<polygon points="654.6,948.6 709.2,948.6 715.5,954.8 715.5,957.2 654.6,957.2" fill="#59a8e0"/>
<polygon points="654.6,948.6 709.2,948.6 715.5,954.8 715.5,1012.0 661.4,1012.0 654.6,1005.2" fill="none" stroke="#5aaae3" stroke-width="1.1"/>
<rect x="655.9" y="949.7" width="4.1" height="1.1" fill="#d9cfc0"/>
<rect x="655.9" y="952.0" width="4.1" height="1.1" fill="#d9cfc0"/>
<rect x="655.9" y="954.3" width="4.1" height="1.1" fill="#d9cfc0"/>
<rect x="659.2" y="961.67" width="52.7" height="1.35" fill="#aaa9ad"/>
<rect x="659.2" y="968.60" width="52.7" height="1.35" fill="#aaa9ad"/>
<rect x="659.2" y="975.53" width="52.7" height="1.35" fill="#aaa9ad"/>
<rect x="659.2" y="982.46" width="52.7" height="1.35" fill="#aaa9ad"/>
<rect x="659.2" y="989.39" width="52.7" height="1.35" fill="#aaa9ad"/>
<rect x="659.2" y="996.32" width="52.7" height="1.35" fill="#aaa9ad"/>
<g transform="translate(671.5 993.2)">
<rect x="0" y="0" width="27.0" height="27.0" rx="3.4" fill="#2a2e33" stroke="#4d97cf" stroke-width="1.15"/>
<g fill="none" stroke="#366c94" stroke-width="0.75" transform="translate(-0.4 -0.4)"><path d="M5.3 5.4q0-.9.9-.9h4.3l1.3 1.3v5.6q0 .9-.9.9h-4.7q-.9 0-.9-.9z"/><path d="M17.3 8.3q0-.9.9-.9h4.3l1.3 1.3v5.6q0 .9-.9.9h-4.7q-.9 0-.9-.9z"/><path d="M7.4 17.2q0-.9.9-.9h4.3l1.3 1.3v5.6q0 .9-.9.9h-4.7q-.9 0-.9-.9z"/><path d="M11.8 8.3L16.3 11.5h1M13.9 20.4c2.2-1.2 1.4-6.6 2.6-8.8"/><path d="M5.6 5.6h5.6M17.6 8.5h5.6M7.7 17.4h5.6" stroke-width="1.2"/><path d="M5.3 8.4h1.1M11.8 8.4h-1.1M17.3 11.3h1.1M23.8 11.3h-1.1M7.4 20.2h1.1M13.9 20.2h-1.1" stroke-width="0.9"/></g>
</g>
<polygon points="654.6,1035.5 709.2,1035.5 715.5,1041.8 715.5,1099.0 661.4,1099.0 654.6,1092.2" fill="#525666"/>
<polygon points="654.6,1035.5 709.2,1035.5 715.5,1041.8 715.5,1044.1 654.6,1044.1" fill="#59a8e0"/>
<polygon points="654.6,1035.5 709.2,1035.5 715.5,1041.8 715.5,1099.0 661.4,1099.0 654.6,1092.2" fill="none" stroke="#5aaae3" stroke-width="1.1"/>
<rect x="655.9" y="1036.6" width="4.1" height="1.1" fill="#d9cfc0"/>
<rect x="655.9" y="1038.9" width="4.1" height="1.1" fill="#d9cfc0"/>
<rect x="655.9" y="1041.2" width="4.1" height="1.1" fill="#d9cfc0"/>
<rect x="659.2" y="1048.67" width="52.7" height="1.35" fill="#aaa9ad"/>
<rect x="659.2" y="1055.60" width="52.7" height="1.35" fill="#aaa9ad"/>
<rect x="659.2" y="1062.53" width="52.7" height="1.35" fill="#aaa9ad"/>
<rect x="659.2" y="1069.46" width="52.7" height="1.35" fill="#aaa9ad"/>
<rect x="659.2" y="1076.39" width="52.7" height="1.35" fill="#aaa9ad"/>
<rect x="659.2" y="1083.32" width="52.7" height="1.35" fill="#aaa9ad"/>
<g transform="translate(671.5 1080.2)">
<rect x="0" y="0" width="27.0" height="27.0" rx="3.4" fill="#2a2e33" stroke="#4d97cf" stroke-width="1.15"/>
<g fill="none" stroke="#366c94" stroke-width="0.75" transform="translate(-0.4 -0.4)"><path d="M5.3 5.4q0-.9.9-.9h4.3l1.3 1.3v5.6q0 .9-.9.9h-4.7q-.9 0-.9-.9z"/><path d="M17.3 8.3q0-.9.9-.9h4.3l1.3 1.3v5.6q0 .9-.9.9h-4.7q-.9 0-.9-.9z"/><path d="M7.4 17.2q0-.9.9-.9h4.3l1.3 1.3v5.6q0 .9-.9.9h-4.7q-.9 0-.9-.9z"/><path d="M11.8 8.3L16.3 11.5h1M13.9 20.4c2.2-1.2 1.4-6.6 2.6-8.8"/><path d="M5.6 5.6h5.6M17.6 8.5h5.6M7.7 17.4h5.6" stroke-width="1.2"/><path d="M5.3 8.4h1.1M11.8 8.4h-1.1M17.3 11.3h1.1M23.8 11.3h-1.1M7.4 20.2h1.1M13.9 20.2h-1.1" stroke-width="0.9"/></g>
</g>
<polygon points="806.7,696.4 869.2,696.4 875.4,702.6 875.4,836.0 813.5,836.0 806.7,829.2" fill="#525666"/>
<polygon points="806.7,696.4 869.2,696.4 875.4,702.6 875.4,705.0 806.7,705.0" fill="#59a8e0"/>
<polygon points="806.7,696.4 869.2,696.4 875.4,702.6 875.4,836.0 813.5,836.0 806.7,829.2" fill="none" stroke="#5aaae3" stroke-width="1.1"/>
<rect x="808.0" y="697.5" width="4.1" height="1.1" fill="#d9cfc0"/>
<rect x="808.0" y="699.8" width="4.1" height="1.1" fill="#d9cfc0"/>
<rect x="808.0" y="702.1" width="4.1" height="1.1" fill="#d9cfc0"/>
<rect x="811.3" y="709.47" width="59.6" height="1.35" fill="#aaa9ad"/>
<rect x="811.3" y="716.40" width="59.6" height="1.35" fill="#aaa9ad"/>
<rect x="811.3" y="723.33" width="59.6" height="1.35" fill="#aaa9ad"/>
<rect x="811.3" y="730.26" width="59.6" height="1.35" fill="#aaa9ad"/>
<rect x="815.2" y="737.19" width="55.7" height="1.35" fill="#aaa9ad"/>
<rect x="815.2" y="744.12" width="55.7" height="1.35" fill="#aaa9ad"/>
<rect x="815.2" y="751.05" width="55.7" height="1.35" fill="#aaa9ad"/>
<rect x="815.2" y="757.98" width="55.7" height="1.35" fill="#aaa9ad"/>
<rect x="815.2" y="764.91" width="55.7" height="1.35" fill="#aaa9ad"/>
<rect x="811.3" y="771.84" width="59.6" height="1.35" fill="#aaa9ad"/>
<rect x="815.2" y="778.77" width="55.7" height="1.35" fill="#aaa9ad"/>
<rect x="815.2" y="785.70" width="55.7" height="1.35" fill="#aaa9ad"/>
<rect x="815.2" y="792.63" width="55.7" height="1.35" fill="#aaa9ad"/>
<rect x="811.3" y="799.56" width="59.6" height="1.35" fill="#aaa9ad"/>
<rect x="811.3" y="806.49" width="59.6" height="1.35" fill="#aaa9ad"/>
<rect x="811.3" y="813.42" width="59.6" height="1.35" fill="#aaa9ad"/>
<rect x="811.3" y="820.35" width="59.6" height="1.35" fill="#aaa9ad"/>
<g transform="translate(827.5 817.2)">
<rect x="0" y="0" width="27.0" height="27.0" rx="3.4" fill="#2a2e33" stroke="#4d97cf" stroke-width="1.15"/>
<g fill="none" stroke="#366c94" stroke-width="0.75" transform="translate(-0.4 -0.4)"><path d="M5.3 5.4q0-.9.9-.9h4.3l1.3 1.3v5.6q0 .9-.9.9h-4.7q-.9 0-.9-.9z"/><path d="M17.3 8.3q0-.9.9-.9h4.3l1.3 1.3v5.6q0 .9-.9.9h-4.7q-.9 0-.9-.9z"/><path d="M7.4 17.2q0-.9.9-.9h4.3l1.3 1.3v5.6q0 .9-.9.9h-4.7q-.9 0-.9-.9z"/><path d="M11.8 8.3L16.3 11.5h1M13.9 20.4c2.2-1.2 1.4-6.6 2.6-8.8"/><path d="M5.6 5.6h5.6M17.6 8.5h5.6M7.7 17.4h5.6" stroke-width="1.2"/><path d="M5.3 8.4h1.1M11.8 8.4h-1.1M17.3 11.3h1.1M23.8 11.3h-1.1M7.4 20.2h1.1M13.9 20.2h-1.1" stroke-width="0.9"/></g>
</g>
<polygon points="959.5,504.5 1033.0,504.5 1039.2,510.7 1039.2,637.2 966.2,637.2 959.5,630.4" fill="#525666"/>
<polygon points="959.5,504.5 1033.0,504.5 1039.2,510.7 1039.2,513.1 959.5,513.1" fill="#59a8e0"/>
<polygon points="959.5,504.5 1033.0,504.5 1039.2,510.7 1039.2,637.2 966.2,637.2 959.5,630.4" fill="none" stroke="#5aaae3" stroke-width="1.1"/>
<rect x="960.8" y="505.6" width="4.1" height="1.1" fill="#d9cfc0"/>
<rect x="960.8" y="507.9" width="4.1" height="1.1" fill="#d9cfc0"/>
<rect x="960.8" y="510.2" width="4.1" height="1.1" fill="#d9cfc0"/>
<rect x="968.0" y="517.57" width="67.2" height="1.35" fill="#aaa9ad"/>
<rect x="968.0" y="524.50" width="67.2" height="1.35" fill="#aaa9ad"/>
<rect x="968.0" y="531.43" width="67.2" height="1.35" fill="#aaa9ad"/>
<rect x="964.1" y="538.36" width="71.1" height="1.35" fill="#aaa9ad"/>
<rect x="968.0" y="545.29" width="67.2" height="1.35" fill="#aaa9ad"/>
<rect x="968.0" y="552.22" width="67.2" height="1.35" fill="#aaa9ad"/>
<rect x="968.0" y="559.15" width="67.2" height="1.35" fill="#aaa9ad"/>
<rect x="964.1" y="566.08" width="71.1" height="1.35" fill="#aaa9ad"/>
<rect x="964.1" y="573.01" width="71.1" height="1.35" fill="#aaa9ad"/>
<rect x="964.1" y="579.94" width="71.1" height="1.35" fill="#aaa9ad"/>
<rect x="964.1" y="586.87" width="71.1" height="1.35" fill="#aaa9ad"/>
<rect x="964.1" y="593.80" width="71.1" height="1.35" fill="#aaa9ad"/>
<rect x="964.1" y="600.73" width="71.1" height="1.35" fill="#aaa9ad"/>
<rect x="964.1" y="607.66" width="71.1" height="1.35" fill="#aaa9ad"/>
<rect x="964.1" y="614.59" width="71.1" height="1.35" fill="#aaa9ad"/>
<rect x="968.0" y="621.52" width="67.2" height="1.35" fill="#aaa9ad"/>
<g transform="translate(985.8 618.4)">
<rect x="0" y="0" width="27.0" height="27.0" rx="3.4" fill="#2a2e33" stroke="#4d97cf" stroke-width="1.15"/>
<g fill="none" stroke="#366c94" stroke-width="0.75" transform="translate(-0.4 -0.4)"><path d="M5.3 5.4q0-.9.9-.9h4.3l1.3 1.3v5.6q0 .9-.9.9h-4.7q-.9 0-.9-.9z"/><path d="M17.3 8.3q0-.9.9-.9h4.3l1.3 1.3v5.6q0 .9-.9.9h-4.7q-.9 0-.9-.9z"/><path d="M7.4 17.2q0-.9.9-.9h4.3l1.3 1.3v5.6q0 .9-.9.9h-4.7q-.9 0-.9-.9z"/><path d="M11.8 8.3L16.3 11.5h1M13.9 20.4c2.2-1.2 1.4-6.6 2.6-8.8"/><path d="M5.6 5.6h5.6M17.6 8.5h5.6M7.7 17.4h5.6" stroke-width="1.2"/><path d="M5.3 8.4h1.1M11.8 8.4h-1.1M17.3 11.3h1.1M23.8 11.3h-1.1M7.4 20.2h1.1M13.9 20.2h-1.1" stroke-width="0.9"/></g>
</g>
<polygon points="959.5,971.4 1014.4,971.4 1020.6,977.6 1020.6,1007.1 966.2,1007.1 959.5,1000.3" fill="#525666"/>
<polygon points="959.5,971.4 1014.4,971.4 1020.6,977.6 1020.6,980.0 959.5,980.0" fill="#59a8e0"/>
<polygon points="959.5,971.4 1014.4,971.4 1020.6,977.6 1020.6,1007.1 966.2,1007.1 959.5,1000.3" fill="none" stroke="#5aaae3" stroke-width="1.1"/>
<rect x="960.8" y="972.5" width="4.1" height="1.1" fill="#d9cfc0"/>
<rect x="960.8" y="974.8" width="4.1" height="1.1" fill="#d9cfc0"/>
<rect x="960.8" y="977.1" width="4.1" height="1.1" fill="#d9cfc0"/>
<rect x="968.0" y="984.47" width="49.0" height="1.35" fill="#aaa9ad"/>
<rect x="968.0" y="991.40" width="49.0" height="1.35" fill="#aaa9ad"/>
<g transform="translate(976.5 988.2)">
<rect x="0" y="0" width="27.0" height="27.0" rx="3.4" fill="#2a2e33" stroke="#4d97cf" stroke-width="1.15"/>
<g fill="none" stroke="#366c94" stroke-width="0.75" transform="translate(-0.4 -0.4)"><path d="M5.3 5.4q0-.9.9-.9h4.3l1.3 1.3v5.6q0 .9-.9.9h-4.7q-.9 0-.9-.9z"/><path d="M17.3 8.3q0-.9.9-.9h4.3l1.3 1.3v5.6q0 .9-.9.9h-4.7q-.9 0-.9-.9z"/><path d="M7.4 17.2q0-.9.9-.9h4.3l1.3 1.3v5.6q0 .9-.9.9h-4.7q-.9 0-.9-.9z"/><path d="M11.8 8.3L16.3 11.5h1M13.9 20.4c2.2-1.2 1.4-6.6 2.6-8.8"/><path d="M5.6 5.6h5.6M17.6 8.5h5.6M7.7 17.4h5.6" stroke-width="1.2"/><path d="M5.3 8.4h1.1M11.8 8.4h-1.1M17.3 11.3h1.1M23.8 11.3h-1.1M7.4 20.2h1.1M13.9 20.2h-1.1" stroke-width="0.9"/></g>
</g>
</svg>
<div id="split" class="abs"></div>
<div class="abs tab" style="left:1391px;top:55px;width:100px">File Browser</div>
<div id="fb" class="abs"></div>
<div id="fbhead" class="abs"></div>
<div class="abs t hd" style="left:1399.3px;top:83.9px;">Name</div>
<svg class="abs" style="left:1814px;top:85px" width="16" height="12"><path d="M2.4 9.6L8 4l5.6 5.6" fill="none" stroke="#6e7d84" stroke-width="2.4"/></svg>
<svg class="abs" style="left:1399px;top:103px" width="40" height="16"><rect x="1" y="4.2" width="10" height="10" rx="1.6" fill="#a2a2a2"/><rect x="2.8" y="8.3" width="6.4" height="1.9" fill="#202226"/><path d="M21.6 14.6a3.5 3.5 0 0 1-.9-6.9a5.2 5.2 0 0 1 9.6-2.2a3.4 3.4 0 0 1 4.3 3.6a2.9 2.9 0 0 1-.9 5.5z" fill="#a2a2a2"/></svg>
<div class="abs t " style="left:1440.3px;top:106.2px;color:#d6d6d6">File Browser</div>
<div id="gap2" class="abs"></div>
<div class="abs tab" style="left:1391px;top:617px;width:116px">Property Editor</div>
<div class="abs" style="left:1398px;top:645px;width:455px;height:20px;background:#282828;border-radius:3px 0 0 3px"></div>
<div class="abs t " style="left:1661.0px;top:649.2px;">Check focused component</div>
<div class="abs t " style="left:1395.0px;top:673.6px;width:455.5px;overflow:hidden;letter-spacing:0.245px">Path: /media/miwong/ELAINE_4TB/NDAS/ndas/apps/roadrunner-2.0/graphs/descriptions</div>
<div class="abs t " style="left:1395.0px;top:692.5px;">Component Type: Graphlet</div>
<div class="abs sep" style="top:711px"></div>
<div class="abs t " style="left:1395.0px;top:722.5px;">Name:</div>
<div class="abs t dim" style="left:1440.0px;top:722.5px;">nioDemo</div>
<div class="abs sep" style="top:746px"></div>
<div class="abs t " style="left:1395.0px;top:753.4px;">Input Ports</div>
<div class="abs th" style="top:771.2px"></div>
<div class="abs t hd" style="left:1399.3px;top:774.7px;">Name</div>
<div class="abs t hd" style="left:1696.0px;top:774.7px;">Data Type</div>
<div class="abs t dim" style="left:1400.0px;top:796.6px;font-size:11.5px">&lt;name&gt;</div>
<div class="abs t dim" style="left:1697.0px;top:796.6px;font-size:11.5px">&lt;type&gt;</div>
<div class="abs sep" style="top:824.4px"></div>
<div class="abs t " style="left:1395.0px;top:831.4px;">Output Ports</div>
<div class="abs th" style="top:849.2px"></div>
<div class="abs t hd" style="left:1399.3px;top:852.7px;">Name</div>
<div class="abs t hd" style="left:1696.0px;top:852.7px;">Data Type</div>
<div class="abs t dim" style="left:1400.0px;top:874.6px;font-size:11.5px">&lt;name&gt;</div>
<div class="abs t dim" style="left:1697.0px;top:874.6px;font-size:11.5px">&lt;type&gt;</div>
<div class="abs sep" style="top:902.4px"></div>
<div class="abs t " style="left:1395.0px;top:908.5px;">Subcomponents: 18</div>
<div class="abs t " style="left:1395.0px;top:927.5px;">Connections: 83</div>
</body></html>
